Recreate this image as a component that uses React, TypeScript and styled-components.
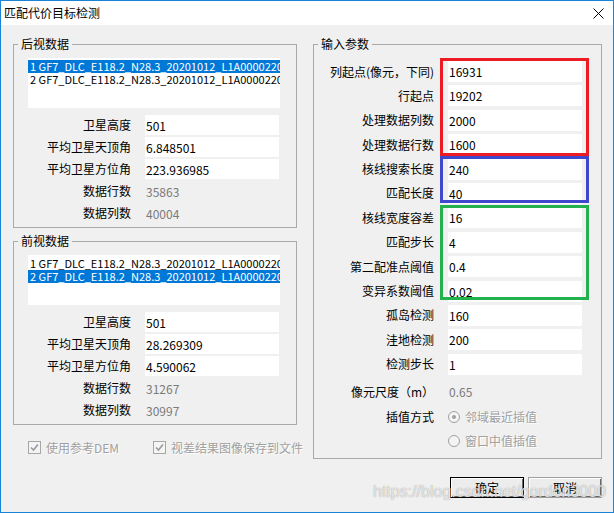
import React from "react";
import styled, { createGlobalStyle } from "styled-components";

const GlobalStyle = createGlobalStyle`
  html, body {
    margin: 0;
    padding: 0;
    background: #ffffff;
  }
  body {
    font-family: "Noto Sans CJK SC", "Microsoft YaHei", sans-serif;
    font-size: 12px;
    color: #000;
  }
  * {
    box-sizing: border-box;
  }
`;

const Window = styled.div`
  position: relative;
  width: 614px;
  height: 513px;
  border: 1px solid #1883d7;
  background: #f0f0f0;
  display: flex;
  flex-direction: column;
  overflow: hidden;
`;

const TitleBar = styled.div`
  flex: none;
  height: 24px;
  background: #ffffff;
  display: flex;
  align-items: center;
  justify-content: space-between;
  padding: 0 9px 0 3px;
`;

const Title = styled.span`
  font-size: 12px;
  line-height: 16px;
`;

const Body = styled.div`
  flex: 1;
  display: flex;
  gap: 16px;
  padding: 11px 0 0 12px;
`;

const Column = styled.div<{ $width: number }>`
  width: ${(p) => p.$width}px;
  flex: none;
  display: flex;
  flex-direction: column;
`;

const Group = styled.fieldset<{ $mt?: number }>`
  margin: ${(p) => p.$mt ?? 0}px 0 0 0;
  padding: 0;
  min-width: 0;
  border: 1px solid #a9a9a9;
`;

const Legend = styled.legend`
  margin-left: 4px;
  padding: 0 3px;
  font-size: 12px;
  line-height: 16px;
`;

const GroupBody = styled.div<{ $pad: string }>`
  position: relative;
  padding: ${(p) => p.$pad};
  display: flex;
  flex-direction: column;
`;

const ListBox = styled.div`
  height: 50px;
  background: #ffffff;
  padding-top: 2px;
  overflow: hidden;
  margin-bottom: 7px;
`;

const ListItem = styled.div<{ $selected?: boolean }>`
  height: 13px;
  line-height: 13px;
  padding-left: 2px;
  white-space: nowrap;
  overflow: hidden;
  font-size: 11px;
  background: ${(p) => (p.$selected ? "#0078d7" : "transparent")};
  color: ${(p) => (p.$selected ? "#ffffff" : "#000000")};
`;

const Rows = styled.div<{ $gap: number }>`
  display: flex;
  flex-direction: column;
  gap: ${(p) => p.$gap}px;
`;

const Row = styled.div<{ $label: number; $h: number; $mt?: number }>`
  display: grid;
  grid-template-columns: ${(p) => p.$label}px 134px;
  column-gap: 14px;
  height: ${(p) => p.$h}px;
  align-items: center;
  margin-top: ${(p) => p.$mt ?? 0}px;
`;

const Label = styled.span`
  text-align: right;
  white-space: nowrap;
  font-size: 12px;
  line-height: 16px;
`;

const Field = styled.div`
  height: 100%;
  background: #ffffff;
  display: flex;
  align-items: center;
  padding-left: 1px;
  font-size: 12px;
`;

const Value = styled.span`
  color: #7a7a7a;
  padding-left: 1px;
  font-size: 12px;
`;

const Mark = styled.div<{ $color: string; $top: number; $h: number }>`
  position: absolute;
  left: 126px;
  top: ${(p) => p.$top}px;
  width: 149px;
  height: ${(p) => p.$h}px;
  border: 3px solid ${(p) => p.$color};
  pointer-events: none;
`;

const CheckRow = styled.div`
  display: flex;
  margin-top: 14px;
  padding-left: 15px;
  height: 16px;
  align-items: center;
`;

const CheckItem = styled.label<{ $width?: number }>`
  display: flex;
  align-items: center;
  gap: 5px;
  flex: none;
  white-space: nowrap;
  width: ${(p) => (p.$width ? `${p.$width}px` : "auto")};
  color: #a0a0a0;
  text-shadow: 1px 1px 0 #ffffff;
  font-size: 12px;
`;

const CheckBox = styled.span`
  width: 13px;
  height: 13px;
  border: 1px solid #a6a6a6;
  background: #f4f4f4;
  display: flex;
  align-items: center;
  justify-content: center;
`;

const RadioItem = styled.div`
  display: flex;
  align-items: center;
  gap: 5px;
  white-space: nowrap;
  color: #a0a0a0;
  text-shadow: 1px 1px 0 #ffffff;
  font-size: 12px;
`;

const RadioCircle = styled.span<{ $checked?: boolean }>`
  width: 12px;
  height: 12px;
  border-radius: 50%;
  border: 1px solid #a0a0a0;
  background: #f4f4f4;
  display: flex;
  align-items: center;
  justify-content: center;
  &::after {
    content: "";
    width: 4px;
    height: 4px;
    border-radius: 50%;
    background: ${(p) => (p.$checked ? "#a0a0a0" : "transparent")};
  }
`;

const ButtonRow = styled.div`
  display: flex;
  justify-content: flex-end;
  gap: 4px;
  margin-top: 18px;
`;

const Button = styled.button<{ $default?: boolean }>`
  width: 74px;
  height: 21px;
  padding: 0;
  font-family: "Noto Sans CJK SC", sans-serif;
  font-size: 12px;
  color: #000;
  background: #ececec;
  border: 1px solid ${(p) => (p.$default ? "#000000" : "#a0a0a0")};
  box-shadow: inset 1px 1px 0 #ffffff, inset -1px -1px 0 #696969;
`;

const Watermark = styled.div`
  position: absolute;
  left: 372px;
  top: 482px;
  font-family: "Liberation Sans", Arial, sans-serif;
  font-size: 16px;
  line-height: 18px;
  color: rgba(255, 255, 255, 0.75);
  text-shadow: 0 0 1px rgba(90, 90, 90, 0.7);
  white-space: nowrap;
  pointer-events: none;
`;

const fileName = "GF7_DLC_E118.2_N28.3_20201012_L1A0000220367_BWDPAN";

type Info = { height: string; zenith: string; azimuth: string; rows: string; cols: string };

function DataGroup({ title, selected, info, mt }: { title: string; selected: number; info: Info; mt?: number }) {
  return (
    <Group $mt={mt}>
      <Legend>{title}</Legend>
      <GroupBody $pad="6px 16px 4px 14px">
        <ListBox>
          {[1, 2].map((n) => (
            <ListItem key={n} $selected={n === selected}>
              {n} {fileName}
            </ListItem>
          ))}
        </ListBox>
        <Rows $gap={2}>
          <Row $label={103} $h={20}>
            <Label>卫星高度</Label>
            <Field>{info.height}</Field>
          </Row>
          <Row $label={103} $h={20}>
            <Label>平均卫星天顶角</Label>
            <Field>{info.zenith}</Field>
          </Row>
          <Row $label={103} $h={20}>
            <Label>平均卫星方位角</Label>
            <Field>{info.azimuth}</Field>
          </Row>
          <Row $label={103} $h={20}>
            <Label>数据行数</Label>
            <Value>{info.rows}</Value>
          </Row>
          <Row $label={103} $h={20}>
            <Label>数据列数</Label>
            <Value>{info.cols}</Value>
          </Row>
        </Rows>
      </GroupBody>
    </Group>
  );
}

const params: [string, string][] = [
  ["列起点(像元，下同)", "16931"],
  ["行起点", "19202"],
  ["处理数据列数", "2000"],
  ["处理数据行数", "1600"],
  ["核线搜索长度", "240"],
  ["匹配长度", "40"],
  ["核线宽度容差", "16"],
  ["匹配步长", "4"],
  ["第二配准点阈值", "0.4"],
  ["变异系数阈值", "0.02"],
  ["孤岛检测", "160"],
  ["洼地检测", "200"],
  ["检测步长", "1"],
];

const Check = () => (
  <svg width="9" height="9" viewBox="0 0 9 9">
    <path d="M1 4.5 L3.5 7 L8 1.5" fill="none" stroke="#9a9a9a" strokeWidth="1.6" />
  </svg>
);

export default function App() {
  return (
    <>
      <GlobalStyle />
      <Window>
        <TitleBar>
          <Title>匹配代价目标检测</Title>
          <svg width="11" height="11" viewBox="0 0 11 11">
            <path d="M0.5 0.5 L10.5 10.5 M10.5 0.5 L0.5 10.5" stroke="#000" strokeWidth="1" />
          </svg>
        </TitleBar>
        <Body>
          <Column $width={284}>
            <DataGroup
              title="后视数据"
              selected={1}
              info={{ height: "501", zenith: "6.848501", azimuth: "223.936985", rows: "35863", cols: "40004" }}
            />
            <DataGroup
              title="前视数据"
              selected={2}
              mt={5}
              info={{ height: "501", zenith: "28.269309", azimuth: "4.590062", rows: "31267", cols: "30997" }}
            />
            <CheckRow>
              <CheckItem $width={125}>
                <CheckBox>
                  <Check />
                </CheckBox>
                使用参考DEM
              </CheckItem>
              <CheckItem>
                <CheckBox>
                  <Check />
                </CheckBox>
                视差结果图像保存到文件
              </CheckItem>
            </CheckRow>
          </Column>
          <Column $width={289}>
            <Group>
              <Legend>输入参数</Legend>
              <GroupBody $pad="9px 19px 7px 8px">
                <Rows $gap={3.4}>
                  {params.map(([label, value]) => (
                    <Row key={label} $label={112} $h={21}>
                      <Label>{label}</Label>
                      <Field>{value}</Field>
                    </Row>
                  ))}
                </Rows>
                <Row $label={112} $h={20} $mt={7}>
                  <Label>像元尺度（m）</Label>
                  <Value>0.65</Value>
                </Row>
                <Row $label={112} $h={20} $mt={5}>
                  <Label>插值方式</Label>
                  <RadioItem>
                    <RadioCircle $checked />
                    邻域最近插值
                  </RadioItem>
                </Row>
                <Row $label={112} $h={20} $mt={4}>
                  <span />
                  <RadioItem>
                    <RadioCircle />
                    窗口中值插值
                  </RadioItem>
                </Row>
                <Mark $color="#ed1c24" $top={6} $h={98} />
                <Mark $color="#3f48cc" $top={104} $h={47} />
                <Mark $color="#22b14c" $top={153} $h={95} />
              </GroupBody>
            </Group>
            <ButtonRow>
              <Button $default>确定</Button>
              <Button>取消</Button>
            </ButtonRow>
          </Column>
        </Body>
        <Watermark>https://blog.csdn.net/gordon3000</Watermark>
      </Window>
    </>
  );
}
